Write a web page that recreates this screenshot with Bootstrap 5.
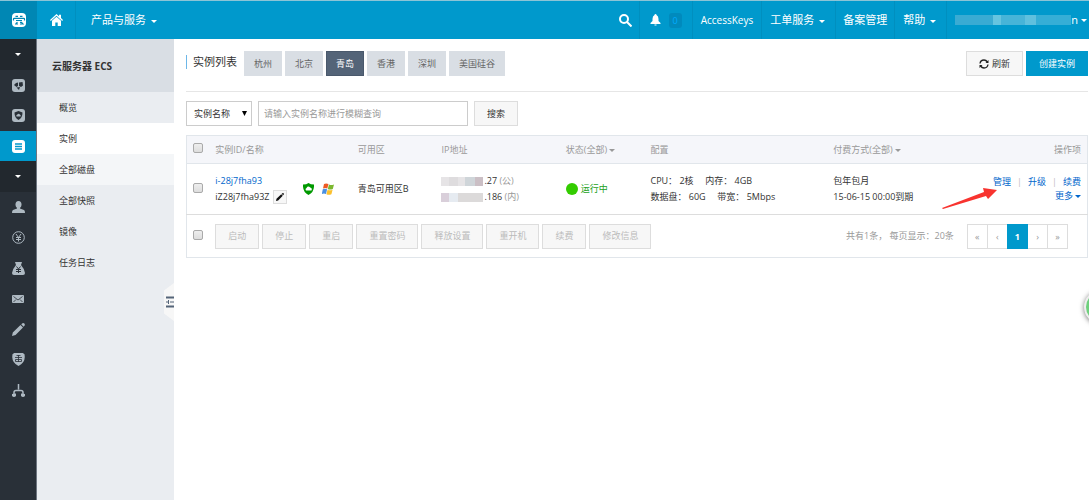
<!DOCTYPE html>
<html lang="zh-CN">
<head>
<meta charset="utf-8">
<meta name="viewport" content="width=device-width, initial-scale=1">
<title>云服务器 ECS - 实例列表</title>
<link href="https://cdn.jsdelivr.net/npm/bootstrap@5.3.0/dist/css/bootstrap.min.css" rel="stylesheet">
<style>
  :root { --brand: #09c; --line: #e1e6eb; }
  body { font-family: "Open Sans", "Noto Sans CJK SC", sans-serif; font-size: 9px; line-height: 16px; color: #333; overflow-x: hidden; }
  a { text-decoration: none; color: #06c; }
  svg { display: block; }
  .caret { display: inline-block; border: 3px solid transparent; border-top-color: currentColor; border-bottom: 0; vertical-align: middle; }

  .topbar { height: 39px; background: var(--brand); border-top: 1px solid #8cc4d6; font-size: 11px; }
  .topbar a { color: #fff; border-right: 1px solid #008fbf; white-space: nowrap; padding: 0 7px; }
  .topbar .plain { border-right: 0; }
  .topbar .caret { margin-left: 5px; }
  .topbar .logo { width: 37px; background: #0087b4; }
  .topbar .home { width: 39px; }
  .topbar .products { padding-left: 15px; }
  .topbar .keys { font-size: 10px; padding: 0 8px; }
  .topbar .menu { padding: 0 10px 0 8px; }
  .topbar .account { padding: 0 2px 0 8px; }
  .topbar .account .caret { margin-left: 3px; }
  .count { width: 13px; height: 15px; font-size: 9px; line-height: 15px; border-radius: 3px; background: #008abd; color: #0af; text-align: center; }
  .hidden-name { width: 116px; height: 10px; background: linear-gradient(90deg, #3aabd3 0 33%, #66c4e0 33% 40%, #47b4d8 40% 60%, #5fc0de 60% 70%, #35aed6 70%); }

  .rail { width: 37px; background: #293038; border-right: 1px solid #6d7580; color: #aeb9c2; }
  .rail a { height: 31px; color: inherit; }
  .rail a:nth-child(even) { height: 30px; }
  .rail .fold { background: #22282e; color: #fff; }
  .rail .current { background: var(--brand); color: #fff; }

  .side { width: 137px; background: #eaedf1; }
  .side h2 { height: 53px; padding-left: 15px; background: #d9dee4; font-size: 10px; font-weight: 700; }
  .side a { height: 31px; padding-left: 22px; color: #333; }
  .side .current { background: #fff; }
  .side .hovered { background: #f4f6f8; }
  .collapser { position: absolute; right: 0; top: 244px; width: 10px; height: 38px; padding: 0 0 0 2px; border: 0; background: #f7f7f7; clip-path: polygon(0 20%, 100% 0, 100% 100%, 0 80%); }

  .main { padding: 12px 1px 0 12px; min-width: 0; }
  .title { font-size: 11px; line-height: 14px; border-left: 1px solid #6db7e8; padding-left: 6px; margin: 4px 7px 0 0; font-weight: 400; }
  .flat { height: 25px; border: 1px solid #ddd; border-radius: 0; background: #f7f7f7; color: #333; font-size: 9px; line-height: 16px; padding: 3px 12px; white-space: nowrap; }
  .region { padding: 3px 9px; border-color: #d9dee4; background: #d9dee4; color: #666; }
  .region.current { background: #546478; border-color: #4a596c; color: #fff; }
  .create { border-color: var(--brand); background: var(--brand); color: #fff; }
  .flat:disabled { color: #bbb; border-color: #ddd; background: #f7f7f7; opacity: 1; }
  .gap-s { gap: 3px; }
  .gap-m { gap: 6px; }
  .headrow { padding-bottom: 15px; border-bottom: 1px solid #e6e6e6; margin-bottom: 9px; }
  .field { height: 25px; border: 1px solid #ccc; border-radius: 0; font-size: 9px; line-height: 16px; background: #fff; color: #333; }
  .field::placeholder { color: #999; }
  .picker { position: relative; }
  .picker select { width: 66px; padding: 0 7px; appearance: none; }
  .picker svg { position: absolute; right: 5px; top: 10px; pointer-events: none; }
  .query { width: 210px; padding: 0 5px; }

  .instances { width: 100%; table-layout: fixed; border: 1px solid var(--line); margin-top: 9px; }
  .instances th { height: 28px; padding: 0; background: #f5f6fa; border-bottom: 1px solid var(--line); font-weight: 400; color: #999; white-space: nowrap; }
  .instances tbody td { height: 51px; padding: 0; border-bottom: 1px solid #ddd; white-space: nowrap; }
  .instances tfoot td { height: 43px; padding: 0; }
  .instances .caret { margin-left: 2px; }
  .tick { display: block; width: 10px; height: 10px; margin: 0 0 3px 6px; appearance: none; border: 1px solid #aaa; border-radius: 2px; background: linear-gradient(#eee, #ddd); }
  .instances .ops { padding-right: 6px; line-height: 14px; }
  .ops i { font-style: normal; color: #bbb; padding: 0 6px; }
  .systems { padding-right: 24px; }
  .edit { width: 14px; height: 14px; padding: 2px; border: 1px solid #ddd; background: #f7f7f7; color: #111; }
  .masked { width: 42px; height: 9px; margin-right: 1px; background: linear-gradient(90deg, #e6e4e6 0 20%, #dedcde 20% 40%, #e6e4e6 40% 58%, #cfd5d9 58% 80%, #cbbfc5 80%); }
  .masked.pale { background: linear-gradient(90deg, #d9cfda 0 20%, #e6ebf1 20% 40%, #dcdada 40%); }
  .muted { color: #999; }
  .run { color: #1a9f1a; }
  .dot { width: 12px; height: 12px; border-radius: 50%; background: #3c0; }
  .foot-right { padding-right: 19px; gap: 13px; }
  .pager .page-link { min-width: 21px; height: 25px; padding: 3px 7px; line-height: 17px; text-align: center; font-size: 9px; border-radius: 0; border-color: #ddd; color: #999; }
  .pager .page-item:first-child .page-link, .pager .page-item:last-child .page-link { border-radius: 0; }
  .pager .page-item.active .page-link { background: var(--brand); border-color: var(--brand); color: #fff; font-weight: 700; }
  .pointer { position: absolute; right: 90px; top: 53px; pointer-events: none; }
  .orb-clip { position: absolute; right: 0; top: 280px; width: 12px; height: 56px; overflow: hidden; }
  .orb { position: absolute; left: 7px; top: 10px; width: 34px; height: 34px; padding: 0; border: 2px solid #eee; border-radius: 50%; background: #6fd07d; box-shadow: 0 1px 5px #777; }
</style>
</head>
<body class="d-flex flex-column min-vh-100 position-relative">

<nav class="topbar d-flex" aria-label="顶部导航">
  <a href="#" class="logo plain d-flex align-items-center justify-content-center" aria-label="控制台">
    <svg width="14" height="14" viewBox="0 0 14 14"><rect width="14" height="14" rx="4" fill="#fff"/><path d="M3.500 3.300h2.500M8 3.300h2.500M1.500 7.500V6q0-.6.600-.6h9.800q.6 0 .6.600v1.500M4 7.500h6M3 11h3M5.500 9.300L4 10.500M8 9.300h1.500L11 11H8" fill="none" stroke="#0087b4" stroke-width="1.200"/></svg>
  </a>
  <a href="#" class="home d-flex align-items-center justify-content-center" aria-label="首页">
    <svg width="13" height="12" viewBox="0 0 13 12" fill="#fff"><path d="M6.500 0L9 2.300V.8h2v3.300l2 1.900-.8.900L6.500 1.700.8 6.900 0 6z"/><path d="M2 6.700l4.500-4 4.500 4V12H7.700V8.500H5.300V12H2z"/></svg>
  </a>
  <a href="#" class="products plain d-flex align-items-center"><span>产品与服务<span class="caret"></span></span></a>
  <div class="d-flex ms-auto">
    <a href="#" class="d-flex align-items-center" aria-label="搜索">
      <svg width="13" height="13" viewBox="0 0 13 13" fill="none" stroke="#fff" stroke-width="2"><circle cx="5" cy="5" r="4"/><path d="M8 8l4.500 4.500"/></svg>
    </a>
    <a href="#" class="menu d-flex align-items-center gap-m" aria-label="消息">
      <svg width="15" height="12" viewBox="0 0 15 12" fill="#fff"><path d="M7.500 0q1 0 1 1Q10.500 2 10.500 5v2l2 2v1h-10V9l2-2V5q0-3 2-4 0-1 1-1zM6.500 10.500h2v1h-2z"/></svg>
      <span class="count">0</span>
    </a>
    <a href="#" class="keys d-flex align-items-center">AccessKeys</a>
    <a href="#" class="menu d-flex align-items-center"><span>工单服务<span class="caret"></span></span></a>
    <a href="#" class="d-flex align-items-center">备案管理</a>
    <a href="#" class="menu d-flex align-items-center"><span>帮助<span class="caret"></span></span></a>
    <a href="#" class="account plain d-flex align-items-center"><span class="hidden-name"></span>n<span class="caret"></span></a>
  </div>
</nav>

<div class="d-flex flex-grow-1">
  <nav class="rail flex-shrink-0" aria-label="产品">
    <a href="#" class="fold d-flex align-items-center justify-content-center" aria-label="展开"><span class="caret"></span></a>
    <a href="#" class="d-flex align-items-center justify-content-center" aria-label="网络">
      <svg width="13" height="13" viewBox="0 0 13 13"><rect width="13" height="13" rx="3" fill="currentColor"/><path d="M2 6l2-2 2-.5v3.500l-1.500 1zM7 3.500l3.500-.5.5 3.500-2 1.500-2-1z" fill="#293038"/><path d="M4.500 8.500L7 11l1-3z" fill="#293038"/></svg></a>
    <a href="#" class="d-flex align-items-center justify-content-center" aria-label="安全">
      <svg width="13" height="13" viewBox="0 0 13 13"><rect width="13" height="13" rx="3" fill="currentColor"/><path d="M6.500 2l4 1.500q0 5.500-4 7.500-4-2-4-7.500z" fill="#293038"/><path d="M4.500 7.500q-.8-1.500.8-2 1.500-1.500 2.500 0 1.500.5.700 2z" fill="currentColor"/></svg></a>
    <a href="#" class="current d-flex align-items-center justify-content-center" aria-label="云服务器">
      <svg width="13" height="13" viewBox="0 0 13 13"><rect width="13" height="13" rx="3" fill="#fff"/><path d="M3 4h7M3 6.500h7M3 9h7" stroke="#09c" stroke-width="1.300"/></svg></a>
    <a href="#" class="fold d-flex align-items-center justify-content-center" aria-label="展开"><span class="caret"></span></a>
    <a href="#" class="d-flex align-items-center justify-content-center" aria-label="用户">
      <svg width="13" height="12" viewBox="0 0 13 12" fill="currentColor"><ellipse cx="6.500" cy="3.500" rx="3" ry="3.500"/><path d="M5 6h3v1.500l4 1.500q1 .5 1 3H0q0-2.500 1-3l4-1.500z"/></svg></a>
    <a href="#" class="d-flex align-items-center justify-content-center" aria-label="费用">
      <svg width="13" height="13" viewBox="0 0 13 13" fill="none" stroke="currentColor"><circle cx="6.500" cy="6.500" r="5.800"/><path d="M4 3l2.500 3.500L9 3M6.500 6.500v4M4 6.500h5M4 8.500h5"/></svg></a>
    <a href="#" class="d-flex align-items-center justify-content-center" aria-label="账单">
      <svg width="13" height="13" viewBox="0 0 13 13"><path d="M3 0h7L9 3q3.500 4 4 8 0 2-2 2H2q-2 0-2-2 .5-4 4-8z" fill="currentColor"/><path d="M4.500 4.500l2 2.500 2-2.500M6.500 7v4M4 7.500h5M4 9.500h5" fill="none" stroke="#293038"/></svg></a>
    <a href="#" class="d-flex align-items-center justify-content-center" aria-label="消息">
      <svg width="12" height="8" viewBox="0 0 12 8"><rect width="12" height="8" rx="1" fill="currentColor"/><path d="M1.500 1.500L6 5l4.500-3.500M1.500 7L4 4.500M10.500 7L8 4.500" fill="none" stroke="#293038" stroke-width=".8"/></svg></a>
    <a href="#" class="d-flex align-items-center justify-content-center" aria-label="工单">
      <svg width="13" height="13" viewBox="0 0 13 13" fill="currentColor"><path d="M0 13l.8-3.500L8.500 2 11 4.500 3.500 12zM9.200 1.300L10.500.3q1-.6 1.800.3.900.9.300 1.900l-1 1.200z"/></svg></a>
    <a href="#" class="d-flex align-items-center justify-content-center" aria-label="备案">
      <svg width="13" height="13" viewBox="0 0 13 13"><path d="M2 0h9l1.500 1.500Q14 9 6.500 13-1 9 .5 1.500z" fill="currentColor"/><path d="M4.500 2.500h4M3 4.500h7M6.500 2v7M3.500 6.500h6v2h-6z" fill="none" stroke="#293038" stroke-width=".8"/></svg></a>
    <a href="#" class="d-flex align-items-center justify-content-center" aria-label="访问控制">
      <svg width="13" height="13" viewBox="0 0 13 13"><path d="M6.500 0v5.500M2 10.500V8.500q0-2 2-2h5q2 0 2 2v2" fill="none" stroke="currentColor" stroke-width="1.500"/><path d="M0 10l4-.5v2.500q-2 2-4 0zM9 9.500l4 .5v2q-2 2-4 0z" fill="currentColor"/></svg></a>
  </nav>

  <nav class="side flex-shrink-0 position-relative" aria-label="云服务器 ECS">
    <h2 class="d-flex align-items-center m-0">云服务器 ECS</h2>
    <a href="#" class="d-flex align-items-center">概览</a>
    <a href="#" class="current d-flex align-items-center">实例</a>
    <a href="#" class="hovered d-flex align-items-center">全部磁盘</a>
    <a href="#" class="d-flex align-items-center">全部快照</a>
    <a href="#" class="d-flex align-items-center">镜像</a>
    <a href="#" class="d-flex align-items-center">任务日志</a>
    <button type="button" class="collapser" aria-label="收起菜单">
      <svg width="8" height="12" viewBox="0 0 8 12" stroke="#546478" fill="none"><path d="M0 1.500h8M0 10.500h8" stroke-width="2"/><path d="M4 6h4M2.500 4v4M0 6h2"/></svg>
    </button>
  </nav>

  <main class="main flex-grow-1">
    <div class="headrow d-flex">
      <h1 class="title align-self-start">实例列表</h1>
      <div class="d-flex gap-s">
        <button type="button" class="btn flat region">杭州</button>
        <button type="button" class="btn flat region">北京</button>
        <button type="button" class="btn flat region current">青岛</button>
        <button type="button" class="btn flat region">香港</button>
        <button type="button" class="btn flat region">深圳</button>
        <button type="button" class="btn flat region">美国硅谷</button>
      </div>
      <div class="d-flex gap-s ms-auto">
        <button type="button" class="btn flat d-flex align-items-center gap-s">
          <svg width="10" height="10" viewBox="0 0 10 10" fill="none" stroke="#222" stroke-width="1.300"><path d="M1 4.500Q1.500 1 5 1q2 0 3.500 2M9 5.500Q8.500 9 5 9 3 9 1.500 7"/><path d="M9.500 1v3h-3zM.5 9V6h3z" fill="#222" stroke="none"/></svg>刷新
        </button>
        <button type="button" class="btn flat create">创建实例</button>
      </div>
    </div>

    <form class="d-flex gap-m">
      <div class="picker">
        <select class="field" aria-label="查询条件"><option>实例名称</option></select>
        <svg width="5" height="5" viewBox="0 0 5 5"><path d="M0 0h5L2.500 5z"/></svg>
      </div>
      <input type="text" class="query field" aria-label="实例名称" placeholder="请输入实例名称进行模糊查询">
      <button type="button" class="btn flat">搜索</button>
    </form>

    <div class="position-relative">
    <table class="instances">
      <colgroup>
        <col style="width:3.200%"><col style="width:15.800%"><col style="width:9.300%"><col style="width:13.800%"><col style="width:9.400%"><col style="width:20.300%"><col style="width:15%"><col>
      </colgroup>
      <thead>
        <tr>
          <th><input type="checkbox" class="tick" aria-label="全选"></th>
          <th>实例ID/名称</th><th>可用区</th><th>IP地址</th>
          <th>状态(全部)<span class="caret"></span></th>
          <th>配置</th>
          <th>付费方式(全部)<span class="caret"></span></th>
          <th class="ops text-end">操作项</th>
        </tr>
      </thead>
      <tbody>
        <tr>
          <td><input type="checkbox" class="tick" aria-label="选择实例 i-28j7fha93"></td>
          <td>
            <div class="d-flex align-items-center justify-content-between">
              <div>
                <a href="#">i-28j7fha93</a>
                <div class="d-flex align-items-center gap-1">iZ28j7fha93Z
                  <button type="button" class="edit" aria-label="修改名称"><svg width="8" height="8" viewBox="0 0 13 13" fill="currentColor"><path d="M0 13l.8-3.500L8.500 2 11 4.500 3.500 12zM9.200 1.300L10.500.3q1-.6 1.800.3.900.9.300 1.900l-1 1.200z"/></svg></button>
                </div>
              </div>
              <div class="systems d-flex align-items-center gap-2">
                <svg width="11" height="12" viewBox="0 0 11 12"><path d="M5.500 0q2 1.500 5.500 1.500Q11.500 9 5.500 12-.5 9 0 1.500 3.500 1.500 5.500 0z" fill="#090"/><path d="M3 7.500Q1.700 5.700 3.500 5q1.500-2.500 3.700-.5Q9.500 5 8.500 7.500z" fill="#fff"/></svg>
                <svg width="12" height="12" viewBox="0 0 12 12"><path d="M2 1q2-1 4.500 0L5.300 5.500q-2.300-1-4.300 0z" fill="#ee5a24"/><path d="M7 1.500q2 1 5 0l-1.200 4.500q-2.800 1-5 0z" fill="#7cb82f"/><path d="M.8 6.300q2-1 4.300 0L4 11q-2-1-4.200 0z" fill="#4a90e2"/><path d="M5.600 6.800q2.200 1 5 0l-1.200 4.500q-2.700 1-5 0z" fill="#fbc02d"/></svg>
              </div>
            </div>
          </td>
          <td>青岛可用区B</td>
          <td>
            <div class="d-flex align-items-center"><span class="masked"></span>.27&nbsp;<span class="muted">(公)</span></div>
            <div class="d-flex align-items-center"><span class="masked pale"></span>.186&nbsp;<span class="muted">(内)</span></div>
          </td>
          <td><div class="run d-flex align-items-center gap-s"><span class="dot"></span>运行中</div></td>
          <td>CPU： 2核 &nbsp; &nbsp; 内存： 4GB<br>数据盘： 60G &nbsp; &nbsp; 带宽： 5Mbps</td>
          <td>包年包月<br>15-06-15 00:00到期</td>
          <td class="ops text-end"><a href="#">管理</a><i>|</i><a href="#">升级</a><i>|</i><a href="#">续费</a><br><a href="#">更多<span class="caret"></span></a></td>
        </tr>
      </tbody>
      <tfoot>
        <tr>
          <td><input type="checkbox" class="tick" aria-label="全选"></td>
          <td colspan="7">
            <div class="d-flex justify-content-between align-items-center">
              <div class="d-flex gap-s">
                <button type="button" class="btn flat" disabled>启动</button>
                <button type="button" class="btn flat" disabled>停止</button>
                <button type="button" class="btn flat" disabled>重启</button>
                <button type="button" class="btn flat" disabled>重置密码</button>
                <button type="button" class="btn flat" disabled>释放设置</button>
                <button type="button" class="btn flat" disabled>重开机</button>
                <button type="button" class="btn flat" disabled>续费</button>
                <button type="button" class="btn flat" disabled>修改信息</button>
              </div>
              <div class="foot-right d-flex align-items-center">
                <span class="muted">共有1条， 每页显示：20条</span>
                <ul class="pager pagination m-0">
                  <li class="page-item"><a class="page-link" href="#">«</a></li>
                  <li class="page-item"><a class="page-link" href="#">‹</a></li>
                  <li class="page-item active"><a class="page-link" href="#">1</a></li>
                  <li class="page-item"><a class="page-link" href="#">›</a></li>
                  <li class="page-item"><a class="page-link" href="#">»</a></li>
                </ul>
              </div>
            </div>
          </td>
        </tr>
      </tfoot>
    </table>
    <svg class="pointer" width="56" height="21" viewBox="0 0 56 21" aria-hidden="true"><path d="M0 20L42 4 41 0 55 2 46 11 44 8 1 21z" fill="#f8332f"/></svg>
    </div>
  </main>
</div>
<div class="orb-clip"><button type="button" class="orb" aria-label="加速"></button></div>
<script src="https://cdn.jsdelivr.net/npm/bootstrap@5.3.0/dist/js/bootstrap.bundle.min.js"></script>
</body>
</html>
